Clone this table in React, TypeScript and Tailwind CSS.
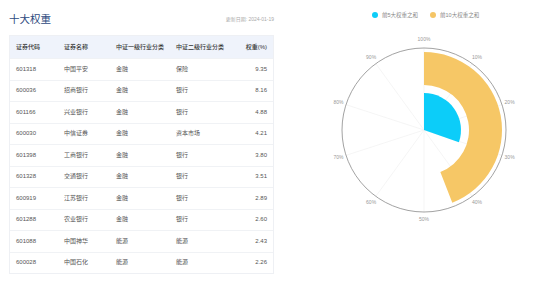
import React from 'react';

const rows = [
  { code: '601318', name: '中国平安', l1: '金融', l2: '保险', w: 9.35 },
  { code: '600036', name: '招商银行', l1: '金融', l2: '银行', w: 8.16 },
  { code: '601166', name: '兴业银行', l1: '金融', l2: '银行', w: 4.88 },
  { code: '600030', name: '中信证券', l1: '金融', l2: '资本市场', w: 4.21 },
  { code: '601398', name: '工商银行', l1: '金融', l2: '银行', w: 3.8 },
  { code: '601328', name: '交通银行', l1: '金融', l2: '银行', w: 3.51 },
  { code: '600919', name: '江苏银行', l1: '金融', l2: '银行', w: 2.89 },
  { code: '601288', name: '农业银行', l1: '金融', l2: '银行', w: 2.6 },
  { code: '601088', name: '中国神华', l1: '能源', l2: '能源', w: 2.43 },
  { code: '600028', name: '中国石化', l1: '能源', l2: '能源', w: 2.26 },
];

const CX = 110;
const CY = 100;

const pt = (r: number, deg: number) => {
  const a = (deg * Math.PI) / 180;
  return [CX + r * Math.sin(a), CY - r * Math.cos(a)];
};

// ring sector from top, clockwise
const sector = (r0: number, r1: number, deg: number) => {
  const large = deg > 180 ? 1 : 0;
  const [ox0, oy0] = pt(r1, 0);
  const [ox1, oy1] = pt(r1, deg);
  if (r0 === 0) {
    return `M${CX},${CY} L${ox0},${oy0} A${r1},${r1} 0 ${large} 1 ${ox1},${oy1} Z`;
  }
  const [ix1, iy1] = pt(r0, deg);
  const [ix0, iy0] = pt(r0, 0);
  return `M${ix0},${iy0} L${ox0},${oy0} A${r1},${r1} 0 ${large} 1 ${ox1},${oy1} L${ix1},${iy1} A${r0},${r0} 0 ${large} 0 ${ix0},${iy0} Z`;
};

const cols = 'grid grid-cols-[48px_52px_60px_58px_1fr] items-center px-[6px]';

export default function App() {
  const top5 = rows.slice(0, 5).reduce((s, r) => s + r.w, 0);
  const top10 = rows.reduce((s, r) => s + r.w, 0);
  const ticks = [0, 1, 2, 3, 4, 5, 6, 7, 8, 9];

  return (
    <div
      className="w-[550px] h-[284px] bg-white flex overflow-hidden"
      style={{ fontFamily: '"Liberation Sans", "Noto Sans CJK SC", sans-serif' }}
    >
      {/* table */}
      <div className="w-[265px] ml-[9px] flex flex-col">
        <div className="flex items-end justify-between h-[35px] pb-[11px]">
          <span className="text-[10.5px] leading-none text-[#2d4a7e]">十大权重</span>
          <span className="text-[5px] leading-none text-[#aaaaaa] mb-[2px]">更新日期: 2024-01-19</span>
        </div>
        <div className="border border-[#eef0f4] text-[6px]">
          <div className={`${cols} h-[22px] bg-[#eff3fb] text-[#333333] font-medium`}>
            <span>证券代码</span>
            <span>证券名称</span>
            <span>中证一级行业分类</span>
            <span>中证二级行业分类</span>
            <span className="text-right">权重(%)</span>
          </div>
          {rows.map((r) => (
            <div key={r.code} className={`${cols} h-[21.5px] border-t border-[#f0f2f5] text-[#555555]`}>
              <span>{r.code}</span>
              <span>{r.name}</span>
              <span>{r.l1}</span>
              <span>{r.l2}</span>
              <span className="text-right">{r.w.toFixed(2)}</span>
            </div>
          ))}
        </div>
      </div>

      {/* chart */}
      <div className="flex-1 flex flex-col">
        <div className="flex items-center h-[30px] pl-[98px] gap-[12px] text-[5.5px] text-[#888888]">
          <div className="flex items-center gap-[4px]">
            <span className="w-[6px] h-[6px] rounded-full bg-[#0dcdf8]" />
            <span>前5大权重之和</span>
          </div>
          <div className="flex items-center gap-[4px]">
            <span className="w-[6px] h-[6px] rounded-full bg-[#f5c566]" />
            <span>前10大权重之和</span>
          </div>
        </div>
        <svg width="220" height="210" className="ml-[40px]">
          {ticks.map((i) => {
            const [x, y] = pt(82, i * 36);
            return <line key={i} x1={CX} y1={CY} x2={x} y2={y} stroke="#f0f0f0" strokeWidth="0.7" />;
          })}
          <path d={sector(45, 78, (top10 / 100) * 360)} fill="#f6c766" />
          <path d={sector(0, 37, (top5 / 100) * 360)} fill="#0ccdf9" />
          <circle cx={CX} cy={CY} r="82" fill="none" stroke="#8a8a8a" strokeWidth="0.8" />
          {ticks.map((i) => {
            const [x, y] = pt(90, i * 36);
            return (
              <text
                key={i}
                x={x}
                y={y}
                fontSize="5"
                fill="#999999"
                textAnchor="middle"
                dominantBaseline="middle"
              >
                {i === 0 ? '100%' : `${i * 10}%`}
              </text>
            );
          })}
        </svg>
      </div>
    </div>
  );
}
